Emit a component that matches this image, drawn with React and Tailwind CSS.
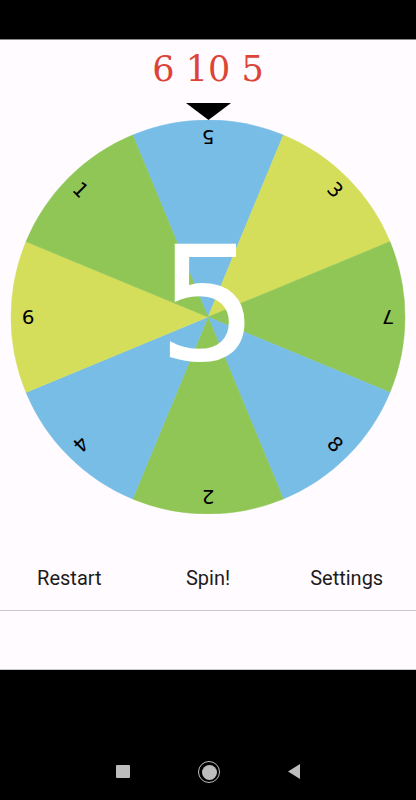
import React from "react";

const CX = 208;
const CY = 197;
const R = 197;
const LR = 180;

const segs = [
  { label: "5", color: "#78bde6", rot: 180 },
  { label: "3", color: "#d4de5a", rot: 45 },
  { label: "7", color: "#8fc656", rot: 180 },
  { label: "8", color: "#78bde6", rot: 45 },
  { label: "2", color: "#8fc656", rot: 180 },
  { label: "4", color: "#78bde6", rot: 135 },
  { label: "9", color: "#d4de5a", rot: 180 },
  { label: "1", color: "#8fc656", rot: 45 },
];

function pt(deg, r) {
  const a = (deg * Math.PI) / 180;
  return [CX + r * Math.sin(a), CY - r * Math.cos(a)];
}

function Wheel() {
  return (
    <svg width="416" height="394" viewBox="0 0 416 394" className="block">
      {segs.map((s, i) => {
        const a0 = i * 45 - 22.5;
        const a1 = i * 45 + 22.5;
        const [x0, y0] = pt(a0, R);
        const [x1, y1] = pt(a1, R);
        return (
          <path
            key={"p" + i}
            d={`M ${CX} ${CY} L ${x0} ${y0} A ${R} ${R} 0 0 1 ${x1} ${y1} Z`}
            fill={s.color}
            stroke={s.color}
            strokeWidth="0.5"
          />
        );
      })}
      {segs.map((s, i) => {
        const [x, y] = pt(i * 45, LR);
        return (
          <text
            key={"t" + i}
            x={x}
            y={y}
            textAnchor="middle"
            dominantBaseline="central"
            fontFamily="'DejaVu Sans', sans-serif"
            fontSize="20"
            fill="#000"
            transform={`rotate(${s.rot} ${x} ${y})`}
          >
            {s.label}
          </text>
        );
      })}
      <text
        x={CX}
        y={CY + 43}
        textAnchor="middle"
        fontFamily="'DejaVu Sans', sans-serif"
        fontSize="158"
        fill="#ffffff"
      >
        5
      </text>
    </svg>
  );
}

export default function App() {
  return (
    <div className="w-[416px] h-[800px] flex flex-col bg-[#fffbfe] overflow-hidden">
      <div className="h-[39px] bg-black shrink-0" />
      <div className="h-px bg-[#8a8a8a] shrink-0" />
      <div className="h-[63px] shrink-0 flex justify-center pt-[8px]">
        <span
          className="text-[35px] leading-[42px] text-[#db4437]"
          style={{ fontFamily: "'DejaVu Serif', serif" }}
        >
          6 10 5
        </span>
      </div>
      <div className="flex justify-center shrink-0 h-[17px]">
        <svg width="45" height="17" viewBox="0 0 45 17" className="block">
          <polygon points="0,0 45,0 22.5,17" fill="#000" />
        </svg>
      </div>
      <div className="shrink-0">
        <Wheel />
      </div>
      <div className="h-[40px] shrink-0" />
      <div
        className="h-[48px] shrink-0 flex text-[20px] leading-[48px] text-[#1d1b20]"
        style={{ fontFamily: "Roboto, sans-serif" }}
      >
        <div className="flex-1 text-center">Restart</div>
        <div className="flex-1 text-center">Spin!</div>
        <div className="flex-1 text-center">Settings</div>
      </div>
      <div className="h-[8px] shrink-0" />
      <div className="h-px bg-[#cac4d0] shrink-0" />
      <div className="flex-1" />
      <div className="h-px bg-[#c8c8c8] shrink-0" />
      <div className="h-[130px] shrink-0 bg-black flex justify-center items-start pt-[91px] gap-[68px]">
        <div className="w-[14px] h-[13px] mt-[4px] bg-[#bdbdbd] rounded-[1px]" />
        <div className="w-[22px] h-[22px] rounded-full border-[1.5px] border-[#bdbdbd] flex items-center justify-center">
          <div className="w-[15px] h-[15px] rounded-full bg-[#bdbdbd]" />
        </div>
        <svg width="12" height="15" viewBox="0 0 12 15" className="block mt-[3px]">
          <polygon points="12,0 12,15 0,7.5" fill="#bdbdbd" />
        </svg>
      </div>
    </div>
  );
}
